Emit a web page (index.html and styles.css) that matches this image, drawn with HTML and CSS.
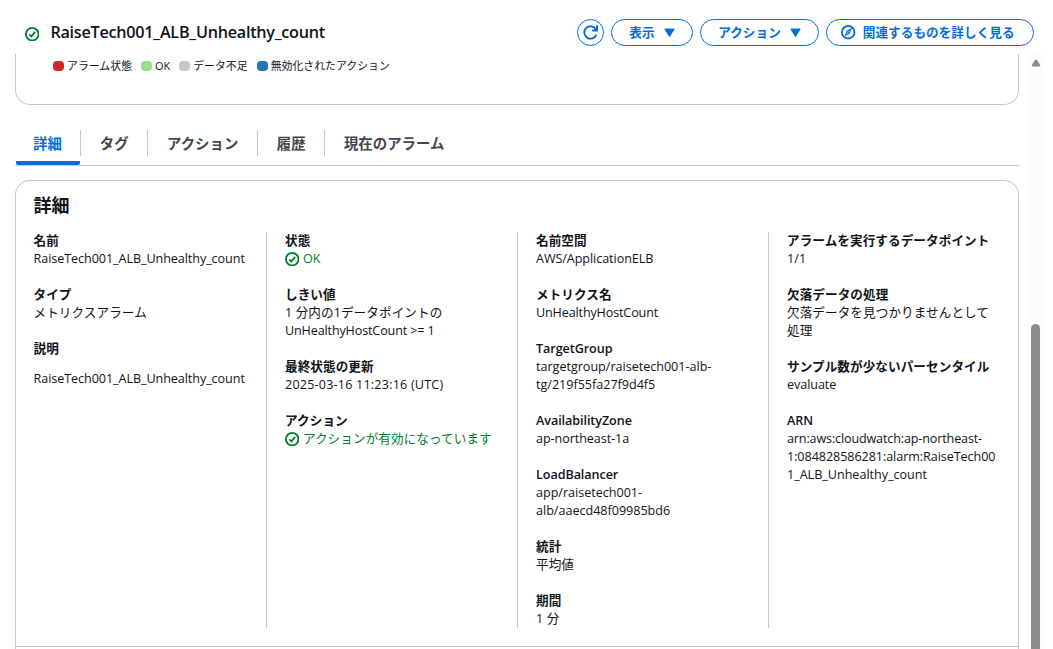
FILE: index.html
```
<!DOCTYPE html>
<html lang="ja">
<head>
<meta charset="utf-8">
<title>RaiseTech001_ALB_Unhealthy_count</title>
<link rel="stylesheet" href="styles.css">
</head>
<body>
<svg class="defs" width="0" height="0">
  <symbol id="ok" viewBox="0 0 16 16"><circle cx="8" cy="8" r="7" fill="none" stroke="currentColor" stroke-width="2"/><path d="M4.8 8.1 7.1 10.4 11.3 5.4" fill="none" stroke="currentColor" stroke-width="2"/></symbol>
</svg>
<header class="header">
  <svg class="icon title-icon"><use href="#ok"/></svg>
  <h1 class="title">RaiseTech001_ALB_Unhealthy_count</h1>
  <div class="actions">
    <button class="btn btn-round"><svg class="refresh" viewBox="0 0 16 16" fill="none" stroke="currentColor" stroke-width="2"><path d="M14.2 10.2A6.6 6.6 0 1 1 13.7 4.6L14.6 5.8"/><path d="M15 .6V5.8H9.8"/></svg></button>
    <button class="btn btn-view">表示<svg class="caret" viewBox="0 0 10 9"><path d="M1 1H9L5 7.5Z"/></svg></button>
    <button class="btn btn-action">アクション<svg class="caret" viewBox="0 0 10 9"><path d="M1 1H9L5 7.5Z"/></svg></button>
    <button class="btn btn-related"><svg class="icon compass" viewBox="0 0 16 16" fill="none" stroke="currentColor"><circle cx="8" cy="8" r="7" stroke-width="2"/><path d="M11 4.5 9.2 9.2 5 11.5 6.8 6.8Z" stroke-width="1.3"/><circle cx="8" cy="8" r=".6"/></svg>関連するものを詳しく見る</button>
  </div>
</header>
<div class="body">
  <main class="main">
    <section class="chart-end">
      <span class="key"><i class="dot red"></i>アラーム状態</span>
      <span class="key"><i class="dot green"></i>OK</span>
      <span class="key"><i class="dot gray"></i>データ不足</span>
      <span class="key"><i class="dot blue"></i>無効化されたアクション</span>
    </section>
    <nav class="tabs">
      <a class="tab active">詳細</a><a class="tab">タグ</a><a class="tab">アクション</a><a class="tab">履歴</a><a class="tab">現在のアラーム</a>
    </nav>
    <section class="panel">
      <h2 class="panel-title">詳細</h2>
      <div class="columns">
        <dl class="col">
          <div><dt>名前</dt><dd class="latin">RaiseTech001_ALB_Unhealthy_count</dd></div>
          <div><dt>タイプ</dt><dd>メトリクスアラーム</dd></div>
          <div><dt>説明</dt><dd class="description latin">RaiseTech001_ALB_Unhealthy_count</dd></div>
        </dl>
        <dl class="col">
          <div><dt>状態</dt><dd class="status"><svg class="icon"><use href="#ok"/></svg>OK</dd></div>
          <div><dt>しきい値</dt><dd>1 分内の1データポイントの<br><span class="tight">UnHealthyHostCount &gt;= 1</span></dd></div>
          <div><dt>最終状態の更新</dt><dd class="date">2025-03-16 11:23:16 (UTC)</dd></div>
          <div><dt>アクション</dt><dd class="status"><svg class="icon"><use href="#ok"/></svg>アクションが有効になっています</dd></div>
        </dl>
        <dl class="col">
          <div><dt>名前空間</dt><dd class="latin">AWS/ApplicationELB</dd></div>
          <div><dt>メトリクス名</dt><dd class="tight">UnHealthyHostCount</dd></div>
          <div><dt class="latin">TargetGroup</dt><dd class="path">targetgroup/raisetech001-alb-<br>tg/219f55fa27f9d4f5</dd></div>
          <div><dt class="latin">AvailabilityZone</dt><dd class="latin">ap-northeast-1a</dd></div>
          <div><dt class="latin">LoadBalancer</dt><dd class="path">app/raisetech001-<br>alb/aaecd48f09985bd6</dd></div>
          <div><dt>統計</dt><dd>平均値</dd></div>
          <div><dt>期間</dt><dd>1 分</dd></div>
        </dl>
        <dl class="col">
          <div><dt>アラームを実行するデータポイント</dt><dd>1/1</dd></div>
          <div><dt>欠落データの処理</dt><dd>欠落データを見つかりませんとして<br>処理</dd></div>
          <div><dt>サンプル数が少ないパーセンタイル</dt><dd class="latin">evaluate</dd></div>
          <div><dt class="latin">ARN</dt><dd class="latin"><span class="tight">arn:aws:cloudwatch:ap-northeast-</span><br>1:084828586281:alarm:RaiseTech00<br><span class="path">1_ALB_Unhealthy_count</span></dd></div>
        </dl>
      </div>
      <div class="panel-footer"></div>
    </section>
  </main>
  <div class="scrollbar"><svg class="scroll-up" viewBox="0 0 10 8"><path d="M4 1Q5 0 6 1L9.2 6Q9.6 7.5 8 7.5H2Q.4 7.5.8 6Z"/></svg><div class="thumb"></div></div>
</div>
</body>
</html>
```
FILE: styles.css
```
* { box-sizing: border-box; }
body { margin: 0; width: 1053px; height: 649px; overflow: hidden; background: #fff; color: #0f141a; font: 12.6px/18px "Open Sans", "Noto Sans CJK JP", sans-serif; display: flex; flex-direction: column; }
.defs { display: block; position: absolute; }
h1, h2, dl, dd { margin: 0; }
.icon { width: 14.4px; height: 14.4px; flex: none; }
.header { height: 54px; flex: none; display: flex; align-items: flex-start; padding: 19px 19px 0 25px; }
.title-icon { color: #00802f; margin-top: 8px; }
.title { font-size: 16.2px; line-height: 27px; font-weight: 600; margin-left: 11px; white-space: nowrap; letter-spacing: -.26px; }
.actions { margin-left: auto; display: flex; gap: 7px; }
.btn { height: 27px; border: 1px solid #006ce0; border-radius: 14px; background: #fff; color: #006ce0; font: 700 12.6px/18px "Open Sans", "Noto Sans CJK JP", sans-serif; letter-spacing: .06px; padding: 0; display: flex; align-items: center; justify-content: center; white-space: nowrap; }
.btn-round { width: 27px; }
.btn-view { width: 82px; gap: 9px; }
.btn-action { width: 119px; gap: 9px; }
.btn-related { width: 208px; gap: 7px; padding-right: 4px; }
.refresh { width: 15px; height: 15px; }
.caret { width: 11px; height: 10px; fill: #006ce0; stroke: #006ce0; stroke-width: 1; stroke-linejoin: round; }
.body { flex: 1; min-height: 0; display: flex; justify-content: space-between; padding-right: 10px; }
.main { width: 1004px; margin-left: 15px; display: flex; flex-direction: column; }
.chart-end { height: 51px; flex: none; border: 1px solid #c6c6cd; border-top: 0; border-radius: 0 0 15px 15px; padding: 3px 0 0 37px; display: flex; gap: 9px; font-size: 10.9px; }
.key { display: flex; align-items: center; gap: 3px; height: 18px; }
.dot { width: 11px; height: 10px; border-radius: 4px; }
.red { background: #d62728; } .green { background: #98df8a; } .gray { background: #c7c7c7; } .blue { background: #1f77b4; }
.tabs { height: 61px; flex: none; border-bottom: 1px solid #c6c6cd; display: flex; align-items: flex-end; padding-left: 1px; }
.tab { height: 40px; padding: 10px 18.5px 0 19.8px; font-size: 14.4px; line-height: 18px; font-weight: 700; color: #424650; position: relative; letter-spacing: .04px; }
.tab.active { width: 64px; color: #006ce0; padding: 10px 0 0 17px; border-bottom: 4px solid #006ce0; border-radius: 2px; }
.tab + .tab::before { content: ""; position: absolute; left: 0; top: 5px; height: 26px; width: 1px; background: #c6c6cd; }
.panel { margin-top: 14px; flex: 1; border: 1px solid #c6c6cd; border-bottom: 0; border-radius: 15px 15px 0 0; }
.panel-title { font-size: 18px; line-height: 22px; font-weight: 700; padding: 13px 17.4px 0; }
.columns { margin-top: 16px; display: grid; grid-template-columns: 250px 251px 251px 250px; height: 396px; }
.col { padding-left: 18px; display: flex; flex-direction: column; gap: 18px; white-space: nowrap; letter-spacing: .08px; }
.col:first-child { padding-left: 17.5px; }
.col + .col { border-left: 1px solid #c6c6cd; }
dt { font-weight: 600; height: 18px; }
dd { line-height: 18px; }
.latin { letter-spacing: -.07px; }
.tight { letter-spacing: -.15px; }
.path { letter-spacing: -.02px; }
.date { letter-spacing: .19px; }
.description { margin-top: 12px; }
.status { color: #00802f; display: flex; align-items: center; gap: 3.5px; height: 18px; }
.panel-footer { margin-top: 18px; border-top: 1px solid #c6c6cd; }
.scrollbar { width: 15px; background: #fcfcfc; display: flex; flex-direction: column; align-items: center; }
.scroll-up { width: 10px; height: 8px; margin-top: 5px; fill: #8b8b8b; }
.thumb { width: 9px; margin-top: 257px; flex: 1; background: #8b8b8b; border-radius: 5px 5px 0 0; }
```
